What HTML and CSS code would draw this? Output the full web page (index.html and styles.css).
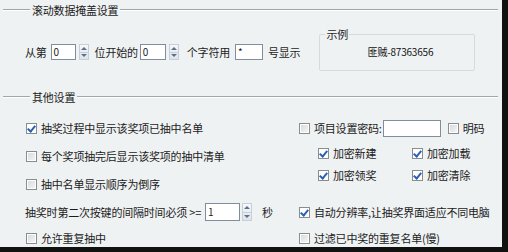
FILE: index.html
```html
<!DOCTYPE html>
<html lang="zh-CN">
<head>
    <meta charset="UTF-8">
    <title>抽奖设置</title>
    <link rel="stylesheet" href="styles.css">
</head>
<body>
    <div class="panel">
        <section class="group">
            <div class="group-head">
                <span class="line lead"></span><span class="title">滚动数据掩盖设置</span><span class="line"></span>
            </div>
            <div class="mask-row">
                <span class="lbl">从第</span>
                <span class="field w24 gap4">0</span>
                <span class="arrows"><i class="up"></i><i class="down"></i></span>
                <span class="lbl gap6">位开始的</span>
                <span class="field w25 gap2">0</span>
                <span class="arrows"><i class="up"></i><i class="down"></i></span>
                <span class="lbl gap8">个字符用</span>
                <span class="field w27 gap5">*</span>
                <span class="lbl gap5">号显示</span>
                <fieldset class="sample">
                    <legend>示例</legend>
                    <div class="sample-text">匪贼-87363656</div>
                </fieldset>
            </div>
        </section>

        <section class="group">
            <div class="group-head">
                <span class="line lead"></span><span class="title">其他设置</span><span class="line"></span>
            </div>
            <div class="options">
                <label class="opt"><span class="cb checked"></span>抽奖过程中显示该奖项已抽中名单</label>
                <div class="opt right">
                    <span class="cb"></span><span>项目设置密码:</span>
                    <span class="field pwd"></span>
                    <span class="cb plain"></span><span>明码</span>
                </div>

                <label class="opt"><span class="cb"></span>每个奖项抽完后显示该奖项的抽中清单</label>
                <div class="crypt right">
                    <label class="opt"><span class="cb checked"></span>加密新建</label>
                    <label class="opt"><span class="cb checked"></span>加密加载</label>
                    <label class="opt"><span class="cb checked"></span>加密领奖</label>
                    <label class="opt"><span class="cb checked"></span>加密清除</label>
                </div>

                <label class="opt"><span class="cb"></span>抽中名单显示顺序为倒序</label>

                <div class="opt interval">
                    <span>抽奖时第二次按键的间隔时间必须 &gt;=</span>
                    <span class="field w34 gap4">1</span>
                    <span class="arrows tall"><i class="up"></i><i class="down"></i></span>
                    <span class="sec">秒</span>
                </div>
                <label class="opt right"><span class="cb checked"></span>自动分辨率,让抽奖界面适应不同电脑</label>

                <label class="opt"><span class="cb"></span>允许重复抽中</label>
                <label class="opt right"><span class="cb"></span>过滤已中奖的重复名单(慢)</label>
            </div>
        </section>
    </div>
</body>
</html>
```

FILE: styles.css
```css
body {
    margin: 0;
    background: #111;
    font-family: "Noto Sans CJK SC", "Noto Sans", sans-serif;
    font-size: 11px;
    letter-spacing: -0.2px;
    color: #1b1b1b;
}
.panel {
    width: 502px;
    height: 247px;
    background: #eff2f3;
    box-sizing: border-box;
    padding: 0 4px 0 3px;
    overflow: hidden;
}

/* group box header: line - title - line */
.group-head {
    display: flex;
    align-items: center;
    height: 20px;
}
.line {
    flex: 1;
    height: 0;
    border-top: 1px solid #a3a6a8;
    border-bottom: 1px solid #fff;
}
.line.lead {
    flex: 0 0 27px;
}
.title {
    padding: 0 2px;
    line-height: 14px;
}

/* scroll mask row */
.mask-row {
    display: flex;
    align-items: center;
    height: 64px;
    padding: 0 0 3px 22px;
}
.lbl {
    line-height: 14px;
}
.field {
    display: inline-block;
    box-sizing: border-box;
    height: 16px;
    background: #fff;
    border: 1px solid #7f8d9c;
    font-size: 10px;
    line-height: 14px;
    padding-left: 2px;
}
.w24 { width: 25px; }
.w25 { width: 26px; }
.w27 { width: 28px; }
.w34 { width: 35px; height: 18px; line-height: 16px; }
.gap2 { margin-left: 2px; }
.gap4 { margin-left: 4px; }
.gap5 { margin-left: 5px; }
.gap6 { margin-left: 6px; }
.gap8 { margin-left: 8px; }

.arrows {
    display: inline-flex;
    flex-direction: column;
    box-sizing: border-box;
    width: 10px;
    height: 16px;
    margin-left: 3px;
    border: 1px solid #c6d0da;
    background: linear-gradient(#f6f8fa, #dde4ea);
}
.arrows.tall {
    height: 18px;
    margin-left: 2px;
}
.arrows i {
    flex: 1;
    display: flex;
    align-items: center;
    justify-content: center;
}
.arrows i::after {
    content: "";
    border-left: 3px solid transparent;
    border-right: 3px solid transparent;
}
.arrows .up::after {
    border-bottom: 3px solid #5d7088;
}
.arrows .down {
    border-top: 1px solid #c6d0da;
}
.arrows .down::after {
    border-top: 3px solid #5d7088;
}

.sample {
    box-sizing: border-box;
    width: 156px;
    height: 44px;
    margin: -6px 0 0 19px;
    padding: 0;
    border: 1px solid #d6dadd;
    border-radius: 2px;
}
.sample legend {
    margin-left: 5px;
    padding: 0 1px;
    font-size: 11px;
    line-height: 14px;
}
.sample-text {
    text-align: center;
    font-size: 10px;
    line-height: 14px;
    padding: 4px 0 0 6px;
    color: #111;
}

/* other settings */
.options {
    display: grid;
    grid-template-columns: 274px 1fr;
    grid-template-rows: 28px 28px 28px 28px 24px;
    padding: 7px 0 0 22px;
}
.opt {
    display: flex;
    align-items: center;
    line-height: 14px;
    white-space: nowrap;
}
.cb {
    box-sizing: border-box;
    flex: 0 0 11px;
    width: 11px;
    height: 11px;
    margin: 0 4px 0 1px;
    border: 1px solid #8a8d90;
    background: linear-gradient(135deg, #d6d8da, #f7f7f7);
    box-shadow: inset 0 0 0 1px #fff;
    position: relative;
}
.cb.plain {
    margin-left: 7px;
}
.cb.checked {
    background: #fff;
}
.cb.checked::after {
    content: "";
    position: absolute;
    left: 2px;
    top: 0;
    width: 3px;
    height: 6px;
    border: solid #2c5fb5;
    border-width: 0 2px 2px 0;
    transform: rotate(40deg);
}
.right {
    grid-column: 2;
}
.right > .cb:first-child {
    margin-left: 0;
}
.pwd {
    width: 58px;
    height: 17px;
    margin-left: 1px;
}
.crypt {
    grid-row: span 2;
    display: grid;
    grid-template-columns: 94px 1fr;
    grid-template-rows: 22px 22px;
    padding-left: 18px;
}
.interval {
    grid-column: 1;
}
.sec {
    margin-left: 10px;
}
```
